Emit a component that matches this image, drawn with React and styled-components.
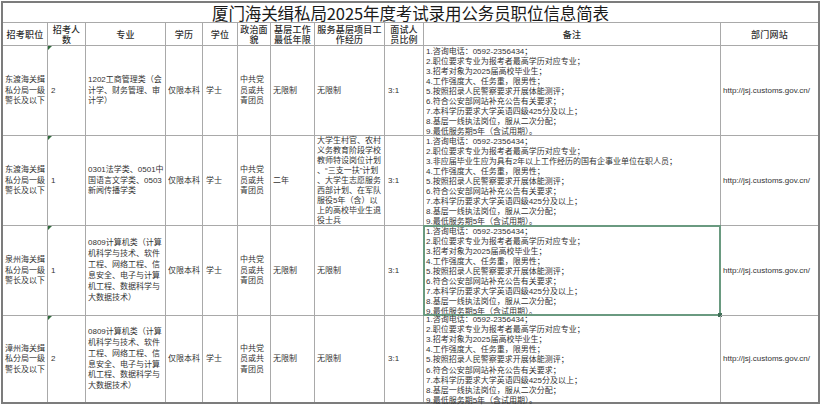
import React from 'react';
import styled, { createGlobalStyle } from 'styled-components';

const GlobalStyle = createGlobalStyle`
  html, body {
    margin: 0;
    padding: 0;
    background: #ffffff;
  }
  body {
    font-family: "Liberation Sans", "Noto Sans CJK SC", sans-serif;
  }
`;

const Page = styled.div`
  width: 820px;
  height: 406px;
  box-sizing: border-box;
  padding: 1px 0 0 1px;
`;

const Sheet = styled.div`
  display: grid;
  grid-template-columns: 45px 38px 80px 37px 35px 33px 44px 70px 39px 297px 97px;
  grid-template-rows: 20px 23px 90px 90px 90px 86px;
  width: 819px;
  box-sizing: border-box;
  border: 2px solid #7c7c7c;
  color: #333;
`;

const Title = styled.div`
  grid-column: 1 / -1;
  display: flex;
  align-items: center;
  justify-content: center;
  border-bottom: 1px solid #a9a9a9;
  font-family: "Noto Sans CJK SC", sans-serif;
  font-size: 16.5px;
  font-weight: 400;
  color: #1a1a1a;
  letter-spacing: -0.1px;
`;

const Cell = styled.div`
  position: relative;
  box-sizing: border-box;
  display: flex;
  flex-direction: column;
  justify-content: center;
  align-items: ${(p) => (p.$center ? 'center' : 'flex-start')};
  padding: ${(p) => p.$pad || '1px 2px 0 2px'};
  border-right: ${(p) => (p.$lastCol ? 'none' : '1px solid #a9a9a9')};
  border-bottom: ${(p) => (p.$lastRow ? 'none' : '1px solid #a9a9a9')};
  font-size: 8px;
  line-height: ${(p) => p.$lh || '10.4px'};
  min-width: 0;
`;

const HeadCell = styled(Cell)`
  font-family: "Liberation Serif", "Noto Sans CJK SC", serif;
  font-size: 9px;
  font-weight: 500;
  line-height: 10px;
  color: #2e2e2e;
  text-align: center;
  letter-spacing: 0.2px;
`;

const Line = styled.span`
  display: block;
  white-space: nowrap;
`;

const TextMark = styled.span`
  position: absolute;
  top: 0;
  left: 0;
  width: 0;
  height: 0;
  border-top: 4px solid #2f6b3b;
  border-right: 4px solid transparent;
`;

const Selection = styled.span`
  position: absolute;
  top: -1px;
  left: -1px;
  right: -1px;
  bottom: -1px;
  border: 2px solid #6a9a80;
  pointer-events: none;

  &:after {
    content: '';
    position: absolute;
    right: -3px;
    bottom: -3px;
    width: 4px;
    height: 4px;
    background: #3f6f57;
  }
`;

const headers = [
  ['招考职位'],
  ['招考人', '数'],
  ['专业'],
  ['学历'],
  ['学位'],
  ['政治面', '貌'],
  ['基层工作', '最低年限'],
  ['服务基层项目工', '作经历'],
  ['面试人', '员比例'],
  ['备注'],
  ['部门网站'],
];

const notesFresh = [
  '1.咨询电话：0592-2356434；',
  '2.职位要求专业为报考者最高学历对应专业；',
  '3.招考对象为2025届高校毕业生；',
  '4.工作强度大、任务重，限男性；',
  '5.按照招录人民警察要求开展体能测评；',
  '6.符合公安部网站补充公告有关要求；',
  '7.本科学历要求大学英语四级425分及以上；',
  '8.基层一线执法岗位，服从二次分配；',
  '9.最低服务期5年（含试用期）。',
];

const notesWorked = [
  '1.咨询电话：0592-2356434；',
  '2.职位要求专业为报考者最高学历对应专业；',
  '3.非应届毕业生应为具有2年以上工作经历的国有企事业单位在职人员；',
  '4.工作强度大、任务重，限男性；',
  '5.按照招录人民警察要求开展体能测评；',
  '6.符合公安部网站补充公告有关要求；',
  '7.本科学历要求大学英语四级425分及以上；',
  '8.基层一线执法岗位，服从二次分配；',
  '9.最低服务期5年（含试用期）。',
];

const computerMajor = [
  '0809计算机类（计算',
  '机科学与技术、软件',
  '工程、网络工程、信',
  '息安全、电子与计算',
  '机工程、数据科学与',
  '大数据技术）',
];

const party = ['中共党', '员或共', '青团员'];
const site = 'http://jsj.customs.gov.cn/';

const rows = [
  {
    post: ['东渡海关缉', '私分局一级', '警长及以下'],
    count: '2',
    major: ['1202工商管理类（会', '计学、财务管理、审', '计学）'],
    years: '无限制',
    exp: ['无限制'],
    notes: notesFresh,
  },
  {
    post: ['东渡海关缉', '私分局一级', '警长及以下'],
    count: '1',
    major: ['0301法学类、0501中', '国语言文学类、0503', '新闻传播学类'],
    years: '二年',
    exp: [
      '大学生村官、农村',
      '义务教育阶段学校',
      '教师特设岗位计划',
      '、“三支一扶”计划',
      '、大学生志愿服务',
      '西部计划、在军队',
      '服役5年（含）以',
      '上的高校毕业生退',
      '役士兵',
    ],
    notes: notesWorked,
  },
  {
    post: ['泉州海关缉', '私分局一级', '警长及以下'],
    count: '1',
    major: computerMajor,
    years: '无限制',
    exp: ['无限制'],
    notes: notesFresh,
    selected: true,
  },
  {
    post: ['漳州海关缉', '私分局一级', '警长及以下'],
    count: '2',
    major: computerMajor,
    years: '无限制',
    exp: ['无限制'],
    notes: notesFresh,
  },
];

const Lines = ({ items }) => items.map((t, i) => <Line key={i}>{t}</Line>);

const App = () => (
  <>
    <GlobalStyle />
    <Page>
      <Sheet>
        <Title>厦门海关缉私局2025年度考试录用公务员职位信息简表</Title>

        {headers.map((h, i) => (
          <HeadCell key={i} $center $lastCol={i === headers.length - 1}>
            <Lines items={h} />
          </HeadCell>
        ))}

        {rows.map((r, i) => {
          const last = i === rows.length - 1;
          return (
            <React.Fragment key={i}>
              <Cell $lastRow={last}>
                <Lines items={r.post} />
              </Cell>
              <Cell $lastRow={last} $pad="1px 3px 0 3px">
                <TextMark />
                <Line>{r.count}</Line>
              </Cell>
              <Cell $lastRow={last} $lh="10.9px">
                <Lines items={r.major} />
              </Cell>
              <Cell $lastRow={last}>
                <Line>仅限本科</Line>
              </Cell>
              <Cell $lastRow={last} $pad="1px 2px 0 3px">
                <Line>学士</Line>
              </Cell>
              <Cell $lastRow={last}>
                <Lines items={party} />
              </Cell>
              <Cell $lastRow={last}>
                <Line>{r.years}</Line>
              </Cell>
              <Cell $lastRow={last} $lh="10.1px">
                <Lines items={r.exp} />
              </Cell>
              <Cell $lastRow={last} $pad="1px 3px 0 3px">
                <Line>3:1</Line>
              </Cell>
              <Cell $lastRow={last} $lh="10.1px" $pad="3px 2px 0 2px">
                <Lines items={r.notes} />
                {r.selected && <Selection />}
              </Cell>
              <Cell $lastRow={last} $lastCol>
                <Line>{site}</Line>
              </Cell>
            </React.Fragment>
          );
        })}
      </Sheet>
    </Page>
  </>
);

export default App;
